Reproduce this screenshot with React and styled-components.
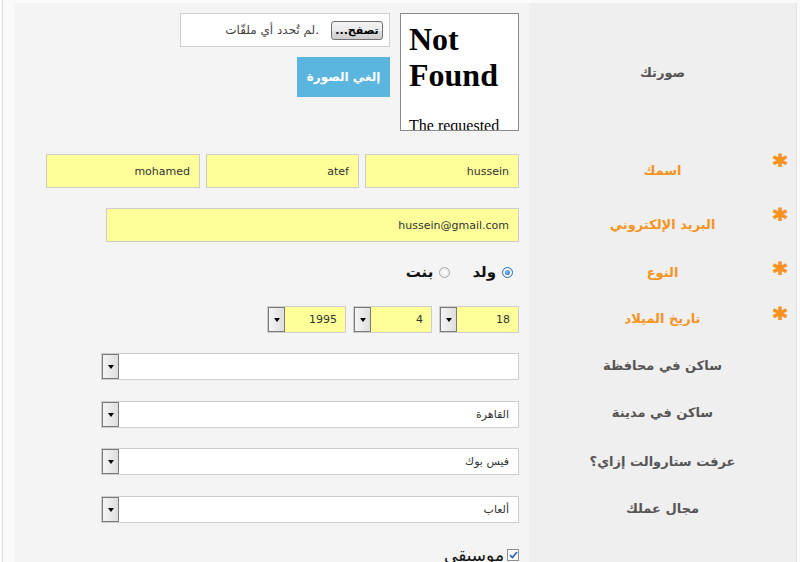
import React from "react";
import styled, { createGlobalStyle } from "styled-components";

const Global = createGlobalStyle`
  html, body { margin: 0; padding: 0; background: #fafafa; overflow: hidden; }
  body { width: 800px; height: 562px; font-family: "DejaVu Sans", sans-serif; }
`;

const Page = styled.div`
  margin-left: 2px;
  border-left: 1px solid #dcdcdc;
  padding: 3px 2px 0 12px;
  height: 559px;
`;

const Panel = styled.div`
  width: 781px;
  height: 100%;
  border-right: 1px solid #e2e2e2;
  background: #f4f4f4;
  direction: rtl;
  display: flex;
  flex-direction: column;
`;

const Row = styled.div`
  display: flex;
  height: ${(p) => p.$h}px;
  flex-shrink: 0;
`;

const LabelCell = styled.div`
  position: relative;
  width: 267px;
  flex-shrink: 0;
  background: #efefef;
  display: flex;
  align-items: center;
  justify-content: center;
  font-family: "DejaVu Sans", sans-serif;
  font-weight: bold;
  font-size: 13px;
  color: ${(p) => (p.$req ? "#f7931e" : "#555555")};
`;

const Star = styled.span`
  position: absolute;
  right: 9px;
  top: ${(p) => p.$top}px;
  font-size: 27px;
  line-height: 27px;
  font-weight: bold;
  color: #f7931e;
  -webkit-text-stroke: 1.2px #f7931e;
  font-family: "DejaVu Sans", sans-serif;
`;

const FieldCell = styled.div`
  flex: 1;
  display: flex;
  align-items: ${(p) => (p.$center ? "center" : "flex-start")};
  padding-top: ${(p) => p.$pt || 0}px;
  padding-inline-start: 10px;
  gap: ${(p) => p.$gap || 0}px;
`;

const PhotoBox = styled.div`
  width: 119px;
  height: 118px;
  margin-top: 10px;
  border: 1px solid #8a8a8a;
  background: #fff;
  direction: ltr;
  overflow: hidden;
  padding: 7px 4px 0 8px;
  box-sizing: border-box;
  font-family: "Liberation Serif", serif;
  color: #000;
  h1 { margin: 0; font-size: 32px; line-height: 36px; font-weight: bold; }
  p { margin: 24px 0 0; font-size: 16px; line-height: 18px; }
`;

const PhotoControls = styled.div`
  margin-top: 10px;
  margin-inline-start: 10px;
  display: flex;
  flex-direction: column;
  align-items: flex-start;
  gap: 10px;
`;

const FileBox = styled.div`
  width: 210px;
  height: 34px;
  box-sizing: border-box;
  border: 1px solid #cfcfcf;
  background: #fff;
  display: flex;
  align-items: center;
  padding-inline-start: 6px;
  gap: 12px;
  font-family: "DejaVu Sans", sans-serif;
  font-size: 12px;
  color: #444;
`;

const FileText = styled.span`
  direction: ltr;
  unicode-bidi: isolate;
`;

const BrowseBtn = styled.span`
  width: 52px;
  height: 19px;
  box-sizing: border-box;
  border: 1px solid #707070;
  border-radius: 3px;
  background: linear-gradient(#f2f2f2, #ebebeb 50%, #dddddd 51%, #cfcfcf);
  display: flex;
  align-items: center;
  justify-content: center;
  font-size: 11px;
  font-weight: bold;
  color: #000;
`;

const BlueButton = styled.button`
  width: 93px;
  height: 40px;
  border: none;
  background: #5bb6df;
  color: #fff;
  font-family: "DejaVu Sans", sans-serif;
  font-weight: bold;
  font-size: 12px;
  padding: 0;
  cursor: pointer;
`;

const TextInput = styled.input`
  width: ${(p) => p.$w}px;
  height: 34px;
  box-sizing: border-box;
  border: 1px solid #cdcdcd;
  background: #ffff99;
  padding: 0 9px;
  direction: rtl;
  text-align: right;
  font-family: "DejaVu Sans", sans-serif;
  font-size: 11px;
  color: #333;
  outline: none;
`;

const RadioGroup = styled.label`
  display: flex;
  align-items: center;
  gap: 6px;
  margin-inline-start: ${(p) => p.$ms || 0}px;
  margin-inline-end: ${(p) => p.$me || 0}px;
  font-family: "DejaVu Sans", sans-serif;
  font-size: 15px;
  font-weight: bold;
  color: #111;
`;

const Radio = styled.span`
  width: 11px;
  height: 11px;
  border-radius: 50%;
  box-sizing: border-box;
  border: 1px solid ${(p) => (p.$on ? "#2d6fa8" : "#a8a8a8")};
  background: radial-gradient(circle, #ffffff 0, #e4e4e4 100%);
  display: flex;
  align-items: center;
  justify-content: center;
  &::after {
    content: "";
    display: ${(p) => (p.$on ? "block" : "none")};
    width: 5px;
    height: 5px;
    border-radius: 50%;
    background: radial-gradient(circle at 40% 35%, #7ec2ff, #1560b8);
  }
`;

const SelectBox = styled.div`
  width: ${(p) => p.$w}px;
  height: 27px;
  box-sizing: border-box;
  border: 1px solid #cdcdcd;
  background: ${(p) => (p.$yellow ? "#ffff99" : "#fff")};
  display: flex;
  align-items: center;
  justify-content: space-between;
  padding-inline-start: ${(p) => (p.$yellow ? 8 : 9)}px;
  font-family: "DejaVu Sans", sans-serif;
  font-size: 11px;
  color: #333;
`;

const DropBtn = styled.span`
  width: 17px;
  height: 25px;
  box-sizing: border-box;
  border: 1px solid #7a7a7a;
  background: linear-gradient(90deg, #f5f5f5, #dedede);
  display: flex;
  align-items: center;
  justify-content: center;
  &::after {
    content: "";
    border-left: 3px solid transparent;
    border-right: 3px solid transparent;
    border-top: 4px solid #000;
  }
`;

const CheckLine = styled.label`
  display: flex;
  align-items: center;
  gap: 3px;
  font-family: "DejaVu Sans", sans-serif;
  font-size: 17px;
  color: #111;
  line-height: 16px;
`;

const CheckBox = styled.span`
  width: 12px;
  height: 12px;
  box-sizing: border-box;
  border: 1px solid #8f8f8f;
  background: #fff;
  display: flex;
  align-items: center;
  justify-content: center;
`;

function Select({ w, yellow, value }) {
  return (
    <SelectBox $w={w} $yellow={yellow}>
      <span>{value}</span>
      <DropBtn />
    </SelectBox>
  );
}

export default function App() {
  return (
    <>
      <Global />
      <Page>
        <Panel>
          <Row $h={138}>
            <LabelCell>صورتك</LabelCell>
            <FieldCell>
              <PhotoBox>
                <h1>Not Found</h1>
                <p>The requested URL was not found on this server.</p>
              </PhotoBox>
              <PhotoControls>
                <FileBox>
                  <BrowseBtn>تصفح...</BrowseBtn>
                  <FileText>لم تُحدد أي ملفّات.</FileText>
                </FileBox>
                <BlueButton>إلغي الصورة</BlueButton>
              </PhotoControls>
            </FieldCell>
          </Row>

          <Row $h={58}>
            <LabelCell $req>
              <Star $top={10}>*</Star>اسمك
            </LabelCell>
            <FieldCell $pt={13} $gap={6}>
              <TextInput $w={154} readOnly defaultValue="hussein" />
              <TextInput $w={153} readOnly defaultValue="atef" />
              <TextInput $w={154} readOnly defaultValue="mohamed" />
            </FieldCell>
          </Row>

          <Row $h={50}>
            <LabelCell $req>
              <Star $top={6}>*</Star>البريد الإلكتروني
            </LabelCell>
            <FieldCell $pt={9}>
              <TextInput $w={413} readOnly defaultValue="hussein@gmail.com" />
            </FieldCell>
          </Row>

          <Row $h={46}>
            <LabelCell $req>
              <Star $top={10}>*</Star>النوع
            </LabelCell>
            <FieldCell $center>
              <RadioGroup $ms={6} $me={22}>
                <Radio $on />
                ولد
              </RadioGroup>
              <RadioGroup>
                <Radio />
                بنت
              </RadioGroup>
            </FieldCell>
          </Row>

          <Row $h={46}>
            <LabelCell $req>
              <Star $top={9}>*</Star>تاريخ الميلاد
            </LabelCell>
            <FieldCell $pt={11} $gap={7}>
              <Select w={80} yellow value="18" />
              <Select w={79} yellow value="4" />
              <Select w={79} yellow value="1995" />
            </FieldCell>
          </Row>

          <Row $h={48}>
            <LabelCell>ساكن في محافظة</LabelCell>
            <FieldCell $pt={12}>
              <Select w={418} value="" />
            </FieldCell>
          </Row>

          <Row $h={46}>
            <LabelCell>ساكن في مدينة</LabelCell>
            <FieldCell $pt={12}>
              <Select w={418} value="القاهرة" />
            </FieldCell>
          </Row>

          <Row $h={52}>
            <LabelCell>عرفت ستاروالت إزاي؟</LabelCell>
            <FieldCell $pt={13}>
              <Select w={418} value="فيس بوك" />
            </FieldCell>
          </Row>

          <Row $h={42}>
            <LabelCell>مجال عملك</LabelCell>
            <FieldCell $pt={9}>
              <Select w={418} value="ألعاب" />
            </FieldCell>
          </Row>

          <Row $h={40}>
            <LabelCell />
            <FieldCell $pt={18}>
              <CheckLine>
                <CheckBox>
                  <svg width="9" height="8" viewBox="0 0 9 8">
                    <path d="M1 4.2 L3.4 6.5 L8 1" stroke="#2c5fb0" strokeWidth="1.7" fill="none" />
                  </svg>
                </CheckBox>
                موسيقى
              </CheckLine>
            </FieldCell>
          </Row>
        </Panel>
      </Page>
    </>
  );
}
